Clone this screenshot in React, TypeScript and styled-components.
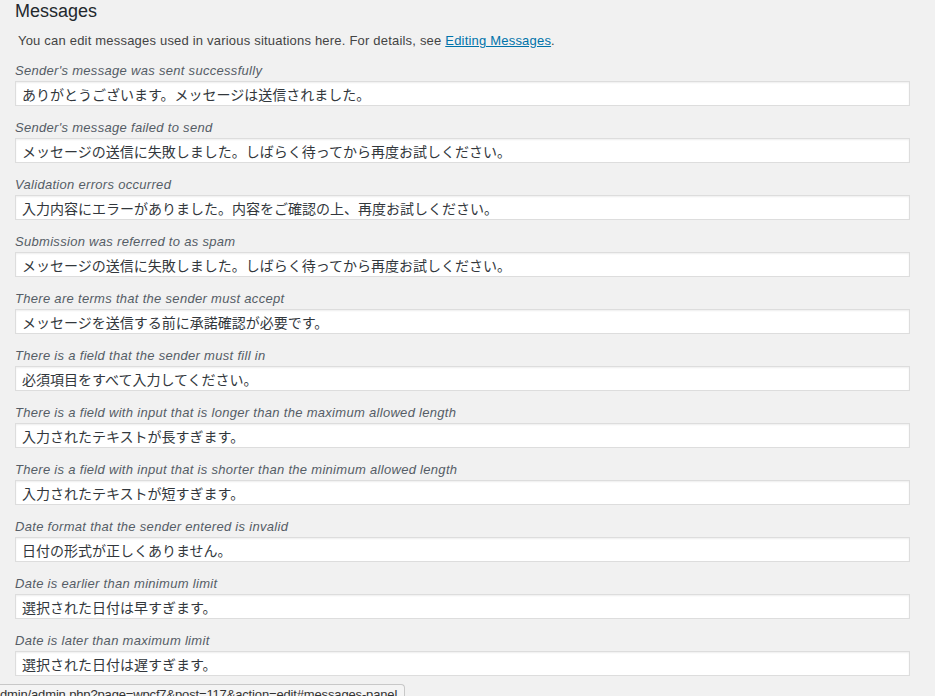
import React from "react";
import styled, { createGlobalStyle } from "styled-components";

const GlobalStyle = createGlobalStyle`
  html, body {
    margin: 0;
    padding: 0;
    background: #f1f1f1;
  }
  body {
    font-family: "Liberation Sans", Arial, "Noto Sans CJK JP", sans-serif;
    color: #23282d;
    overflow: hidden;
  }
`;

const Page = styled.div`
  padding: 0 25px 0 15px;
  min-height: 696px;
  box-sizing: border-box;
`;

const Title = styled.h2`
  margin: 0;
  font-size: 18px;
  line-height: 23px;
  font-weight: 400;
  color: #23282d;
`;

const Description = styled.p`
  margin: 9px 0 11px;
  padding-left: 3px;
  font-size: 13px;
  line-height: 18px;
  letter-spacing: 0.2px;
  color: #444;
`;

const Link = styled.a`
  color: #0073aa;
  text-decoration: underline;
`;

const Field = styled.div`
  display: flex;
  flex-direction: column;
  margin-bottom: 12px;
`;

const Label = styled.label`
  display: block;
  font-size: 13px;
  line-height: 18px;
  font-style: italic;
  letter-spacing: 0.3px;
  color: #555d66;
  padding-top: 1px;
  margin-bottom: 1px;
`;

const Input = styled.input`
  box-sizing: border-box;
  width: 100%;
  height: 25px;
  margin: 0;
  padding: 0 6px;
  border: 1px solid #ddd;
  background: #fff;
  box-shadow: inset 0 1px 2px rgba(0, 0, 0, 0.07);
  font-family: "Noto Sans CJK JP", "Liberation Sans", sans-serif;
  font-size: 14px;
  color: #32373c;
  outline: none;
`;

const StatusBar = styled.div`
  position: fixed;
  left: 0;
  bottom: 0;
  width: 405px;
  height: 12px;
  box-sizing: border-box;
  background: #f4f4f4;
  border: 1px solid #c8c8c8;
  border-left: none;
  border-bottom: none;
  border-top-right-radius: 4px;
  font-family: "Liberation Sans", Arial, sans-serif;
  font-size: 13px;
  line-height: 16px;
  letter-spacing: -0.15px;
  color: #333;
  padding: 2px 0 0 0;
  white-space: nowrap;
  overflow: hidden;
`;

const messages: { label: string; value: string }[] = [
  { label: "Sender's message was sent successfully", value: "ありがとうございます。メッセージは送信されました。" },
  { label: "Sender's message failed to send", value: "メッセージの送信に失敗しました。しばらく待ってから再度お試しください。" },
  { label: "Validation errors occurred", value: "入力内容にエラーがありました。内容をご確認の上、再度お試しください。" },
  { label: "Submission was referred to as spam", value: "メッセージの送信に失敗しました。しばらく待ってから再度お試しください。" },
  { label: "There are terms that the sender must accept", value: "メッセージを送信する前に承諾確認が必要です。" },
  { label: "There is a field that the sender must fill in", value: "必須項目をすべて入力してください。" },
  { label: "There is a field with input that is longer than the maximum allowed length", value: "入力されたテキストが長すぎます。" },
  { label: "There is a field with input that is shorter than the minimum allowed length", value: "入力されたテキストが短すぎます。" },
  { label: "Date format that the sender entered is invalid", value: "日付の形式が正しくありません。" },
  { label: "Date is earlier than minimum limit", value: "選択された日付は早すぎます。" },
  { label: "Date is later than maximum limit", value: "選択された日付は遅すぎます。" },
];

export default function App() {
  return (
    <>
      <GlobalStyle />
      <Page>
        <Title>Messages</Title>
        <Description>
          You can edit messages used in various situations here. For details, see{" "}
          <Link href="#">Editing Messages</Link>.
        </Description>
        {messages.map((m, i) => (
          <Field key={i}>
            <Label htmlFor={`msg-${i}`}>{m.label}</Label>
            <Input id={`msg-${i}`} type="text" defaultValue={m.value} />
          </Field>
        ))}
      </Page>
      <StatusBar>dmin/admin.php?page=wpcf7&amp;post=117&amp;action=edit#messages-panel</StatusBar>
    </>
  );
}
